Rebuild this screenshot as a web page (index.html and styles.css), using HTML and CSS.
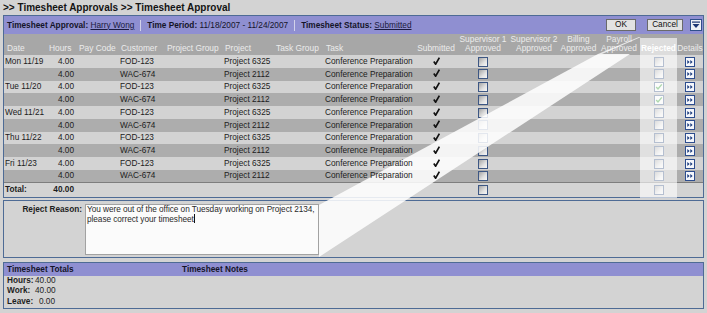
FILE: index.html
```html
<!DOCTYPE html>
<html>
<head>
<meta charset="utf-8">
<link rel="stylesheet" href="styles.css">
</head>
<body>
<h1 class="title">&gt;&gt; Timesheet Approvals &gt;&gt; Timesheet Approval</h1>

<section class="panel main">
  <div class="bar">
    <div class="info">
      <span class="grp"><b>Timesheet Approval:</b> <a class="lnk">Harry Wong</a></span>
      <span class="sep"></span>
      <span class="grp"><b>Time Period:</b> 11/18/2007 - 11/24/2007</span>
      <span class="sep"></span>
      <span class="grp"><b>Timesheet Status:</b> <a class="lnk">Submitted</a></span>
    </div>
    <div class="actions">
      <button class="btn ok">OK</button>
      <button class="btn cancel">Cancel</button>
      <span class="dd"><svg width="12" height="12" viewBox="0 0 12 12"><rect x="0.5" y="0.5" width="11" height="11" fill="#eef0f6" stroke="#2f4f8c"/><rect x="2" y="2.5" width="8" height="1.2" fill="#1c3574"/><path d="M2.5 5 L9.5 5 L6 9 Z" fill="#1c3574"/></svg></span>
    </div>
  </div>

  <table class="grid">
    <colgroup>
      <col class="c-date"><col class="c-hours"><col class="c-pay"><col class="c-cust"><col class="c-pg"><col class="c-proj"><col class="c-tg"><col class="c-task"><col class="c-sub"><col class="c-s1"><col class="c-s2"><col class="c-bill"><col class="c-pay2"><col class="c-rej"><col class="c-det">
    </colgroup>
    <thead>
      <tr class="head">
        <th>Date</th><th>Hours</th><th>Pay Code</th><th>Customer</th><th>Project Group</th><th>Project</th><th>Task Group</th><th>Task</th>
        <th class="ctr">Submitted</th>
        <th class="ctr">Supervisor 1<br>Approved</th>
        <th class="ctr">Supervisor 2<br>Approved</th>
        <th class="ctr">Billing<br>Approved</th>
        <th class="ctr">Payroll<br>Approved</th>
        <th class="ctr rej">Rejected</th>
        <th class="ctr">Details</th>
      </tr>
    </thead>
    <tbody>
      <tr class="r lt"><td class="tx d">Mon 11/19</td><td class="tx h">4.00</td><td></td><td class="tx">FOD-123</td><td></td><td class="tx">Project 6325</td><td></td><td class="tx">Conference Preparation</td><td class="tx ctr"><span class="chk"><svg width="7" height="8" viewBox="0 0 7 8"><path d="M0.8 4.6 L2.6 7.2 L6.4 0.6" stroke="#111" stroke-width="1.7" fill="none"/></svg></span></td><td class="ctr"><span class="cb"></span></td><td></td><td></td><td></td><td class="ctr"><span class="cb"></span></td><td class="ctr"><span class="det"><svg width="10" height="10" viewBox="0 0 10 10"><rect x="0.5" y="0.5" width="9" height="9" fill="#f5f7fc" stroke="#2d4d8e"/><path d="M2.3 3 L4.6 5 L2.3 7 Z M5.3 3 L7.6 5 L5.3 7 Z" fill="#1a3a7c"/></svg></span></td></tr>
      <tr class="r dk"><td class="tx d"></td><td class="tx h">4.00</td><td></td><td class="tx">WAC-674</td><td></td><td class="tx">Project 2112</td><td></td><td class="tx">Conference Preparation</td><td class="tx ctr"><span class="chk"><svg width="7" height="8" viewBox="0 0 7 8"><path d="M0.8 4.6 L2.6 7.2 L6.4 0.6" stroke="#111" stroke-width="1.7" fill="none"/></svg></span></td><td class="ctr"><span class="cb"></span></td><td></td><td></td><td></td><td class="ctr"><span class="cb"></span></td><td class="ctr"><span class="det"><svg width="10" height="10" viewBox="0 0 10 10"><rect x="0.5" y="0.5" width="9" height="9" fill="#f5f7fc" stroke="#2d4d8e"/><path d="M2.3 3 L4.6 5 L2.3 7 Z M5.3 3 L7.6 5 L5.3 7 Z" fill="#1a3a7c"/></svg></span></td></tr>
      <tr class="r lt"><td class="tx d">Tue 11/20</td><td class="tx h">4.00</td><td></td><td class="tx">FOD-123</td><td></td><td class="tx">Project 6325</td><td></td><td class="tx">Conference Preparation</td><td class="tx ctr"><span class="chk"><svg width="7" height="8" viewBox="0 0 7 8"><path d="M0.8 4.6 L2.6 7.2 L6.4 0.6" stroke="#111" stroke-width="1.7" fill="none"/></svg></span></td><td class="ctr"><span class="cb"></span></td><td></td><td></td><td></td><td class="ctr"><span class="cb on"><svg width="8" height="8" viewBox="0 0 8 8"><path d="M1.2 4 L3 6 L6.8 1.4" stroke="#2c9a2c" stroke-width="1.4" fill="none"/></svg></span></td><td class="ctr"><span class="det"><svg width="10" height="10" viewBox="0 0 10 10"><rect x="0.5" y="0.5" width="9" height="9" fill="#f5f7fc" stroke="#2d4d8e"/><path d="M2.3 3 L4.6 5 L2.3 7 Z M5.3 3 L7.6 5 L5.3 7 Z" fill="#1a3a7c"/></svg></span></td></tr>
      <tr class="r dk"><td class="tx d"></td><td class="tx h">4.00</td><td></td><td class="tx">WAC-674</td><td></td><td class="tx">Project 2112</td><td></td><td class="tx">Conference Preparation</td><td class="tx ctr"><span class="chk"><svg width="7" height="8" viewBox="0 0 7 8"><path d="M0.8 4.6 L2.6 7.2 L6.4 0.6" stroke="#111" stroke-width="1.7" fill="none"/></svg></span></td><td class="ctr"><span class="cb"></span></td><td></td><td></td><td></td><td class="ctr"><span class="cb on"><svg width="8" height="8" viewBox="0 0 8 8"><path d="M1.2 4 L3 6 L6.8 1.4" stroke="#2c9a2c" stroke-width="1.4" fill="none"/></svg></span></td><td class="ctr"><span class="det"><svg width="10" height="10" viewBox="0 0 10 10"><rect x="0.5" y="0.5" width="9" height="9" fill="#f5f7fc" stroke="#2d4d8e"/><path d="M2.3 3 L4.6 5 L2.3 7 Z M5.3 3 L7.6 5 L5.3 7 Z" fill="#1a3a7c"/></svg></span></td></tr>
      <tr class="r lt"><td class="tx d">Wed 11/21</td><td class="tx h">4.00</td><td></td><td class="tx">FOD-123</td><td></td><td class="tx">Project 6325</td><td></td><td class="tx">Conference Preparation</td><td class="tx ctr"><span class="chk"><svg width="7" height="8" viewBox="0 0 7 8"><path d="M0.8 4.6 L2.6 7.2 L6.4 0.6" stroke="#111" stroke-width="1.7" fill="none"/></svg></span></td><td class="ctr"><span class="cb"></span></td><td></td><td></td><td></td><td class="ctr"><span class="cb"></span></td><td class="ctr"><span class="det"><svg width="10" height="10" viewBox="0 0 10 10"><rect x="0.5" y="0.5" width="9" height="9" fill="#f5f7fc" stroke="#2d4d8e"/><path d="M2.3 3 L4.6 5 L2.3 7 Z M5.3 3 L7.6 5 L5.3 7 Z" fill="#1a3a7c"/></svg></span></td></tr>
      <tr class="r dk"><td class="tx d"></td><td class="tx h">4.00</td><td></td><td class="tx">WAC-674</td><td></td><td class="tx">Project 2112</td><td></td><td class="tx">Conference Preparation</td><td class="tx ctr"><span class="chk"><svg width="7" height="8" viewBox="0 0 7 8"><path d="M0.8 4.6 L2.6 7.2 L6.4 0.6" stroke="#111" stroke-width="1.7" fill="none"/></svg></span></td><td class="ctr"><span class="cb"></span></td><td></td><td></td><td></td><td class="ctr"><span class="cb"></span></td><td class="ctr"><span class="det"><svg width="10" height="10" viewBox="0 0 10 10"><rect x="0.5" y="0.5" width="9" height="9" fill="#f5f7fc" stroke="#2d4d8e"/><path d="M2.3 3 L4.6 5 L2.3 7 Z M5.3 3 L7.6 5 L5.3 7 Z" fill="#1a3a7c"/></svg></span></td></tr>
      <tr class="r lt"><td class="tx d">Thu 11/22</td><td class="tx h">4.00</td><td></td><td class="tx">FOD-123</td><td></td><td class="tx">Project 6325</td><td></td><td class="tx">Conference Preparation</td><td class="tx ctr"><span class="chk"><svg width="7" height="8" viewBox="0 0 7 8"><path d="M0.8 4.6 L2.6 7.2 L6.4 0.6" stroke="#111" stroke-width="1.7" fill="none"/></svg></span></td><td class="ctr"><span class="cb"></span></td><td></td><td></td><td></td><td class="ctr"><span class="cb"></span></td><td class="ctr"><span class="det"><svg width="10" height="10" viewBox="0 0 10 10"><rect x="0.5" y="0.5" width="9" height="9" fill="#f5f7fc" stroke="#2d4d8e"/><path d="M2.3 3 L4.6 5 L2.3 7 Z M5.3 3 L7.6 5 L5.3 7 Z" fill="#1a3a7c"/></svg></span></td></tr>
      <tr class="r dk"><td class="tx d"></td><td class="tx h">4.00</td><td></td><td class="tx">WAC-674</td><td></td><td class="tx">Project 2112</td><td></td><td class="tx">Conference Preparation</td><td class="tx ctr"><span class="chk"><svg width="7" height="8" viewBox="0 0 7 8"><path d="M0.8 4.6 L2.6 7.2 L6.4 0.6" stroke="#111" stroke-width="1.7" fill="none"/></svg></span></td><td class="ctr"><span class="cb"></span></td><td></td><td></td><td></td><td class="ctr"><span class="cb"></span></td><td class="ctr"><span class="det"><svg width="10" height="10" viewBox="0 0 10 10"><rect x="0.5" y="0.5" width="9" height="9" fill="#f5f7fc" stroke="#2d4d8e"/><path d="M2.3 3 L4.6 5 L2.3 7 Z M5.3 3 L7.6 5 L5.3 7 Z" fill="#1a3a7c"/></svg></span></td></tr>
      <tr class="r lt"><td class="tx d">Fri 11/23</td><td class="tx h">4.00</td><td></td><td class="tx">FOD-123</td><td></td><td class="tx">Project 6325</td><td></td><td class="tx">Conference Preparation</td><td class="tx ctr"><span class="chk"><svg width="7" height="8" viewBox="0 0 7 8"><path d="M0.8 4.6 L2.6 7.2 L6.4 0.6" stroke="#111" stroke-width="1.7" fill="none"/></svg></span></td><td class="ctr"><span class="cb"></span></td><td></td><td></td><td></td><td class="ctr"><span class="cb"></span></td><td class="ctr"><span class="det"><svg width="10" height="10" viewBox="0 0 10 10"><rect x="0.5" y="0.5" width="9" height="9" fill="#f5f7fc" stroke="#2d4d8e"/><path d="M2.3 3 L4.6 5 L2.3 7 Z M5.3 3 L7.6 5 L5.3 7 Z" fill="#1a3a7c"/></svg></span></td></tr>
      <tr class="r dk"><td class="tx d"></td><td class="tx h">4.00</td><td></td><td class="tx">WAC-674</td><td></td><td class="tx">Project 2112</td><td></td><td class="tx">Conference Preparation</td><td class="tx ctr"><span class="chk"><svg width="7" height="8" viewBox="0 0 7 8"><path d="M0.8 4.6 L2.6 7.2 L6.4 0.6" stroke="#111" stroke-width="1.7" fill="none"/></svg></span></td><td class="ctr"><span class="cb"></span></td><td></td><td></td><td></td><td class="ctr"><span class="cb"></span></td><td class="ctr"><span class="det"><svg width="10" height="10" viewBox="0 0 10 10"><rect x="0.5" y="0.5" width="9" height="9" fill="#f5f7fc" stroke="#2d4d8e"/><path d="M2.3 3 L4.6 5 L2.3 7 Z M5.3 3 L7.6 5 L5.3 7 Z" fill="#1a3a7c"/></svg></span></td></tr>
      <tr class="total"><td class="tx d"><b>Total:</b></td><td class="tx h"><b>40.00</b></td><td></td><td></td><td></td><td></td><td></td><td></td><td></td><td class="ctr"><span class="cb"></span></td><td></td><td></td><td></td><td class="ctr"><span class="cb"></span></td><td></td></tr>
    </tbody>
  </table>
</section>

<section class="panel reject">
  <div class="rlabel">Reject Reason:</div>
  <div class="textarea">You were out of the office on Tuesday working on Project 2134,<br>please correct your timesheet<span class="caret"></span></div>
</section>

<section class="panel totals">
  <div class="bar2">
    <div class="tcol">Timesheet Totals</div>
    <div class="ncol">Timesheet Notes</div>
  </div>
  <div class="tlist">
    <div class="trow"><b>Hours:</b><span>40.00</span></div>
    <div class="trow"><b>Work:</b><span>40.00</span></div>
    <div class="trow"><b>Leave:</b><span>0.00</span></div>
  </div>
</section>

<svg class="callout" width="707" height="313" viewBox="0 0 707 313">
  <rect x="640" y="38" width="37" height="160" fill="#ffffff" fill-opacity="0.62"/>
  <polygon points="598,54 630,54 319,257 319,205" fill="#ffffff" fill-opacity="0.86"/>
  <polygon points="598,54 602,54 641,37 639,37" fill="#ffffff" fill-opacity="0.75"/>
</svg>
</body>
</html>
```
FILE: styles.css
```css
* { box-sizing: border-box; }
html, body { margin: 0; padding: 0; }
body {
  background: #d3d3d3;
  font-family: "Liberation Sans", Arial, sans-serif;
  font-size: 8.25px;
  color: #1e1e1e;
  width: 707px;
  height: 313px;
  overflow: hidden;
  position: relative;
}
.title {
  margin: 0;
  padding-left: 3px;
  height: 15px;
  font-size: 10px;
  line-height: 15px;
  font-weight: bold;
  color: #141414;
}
.panel {
  margin: 0 3px;
  border: 1px solid #4e6b95;
  background: #d3d3d3;
}
.bar {
  display: flex;
  align-items: center;
  justify-content: space-between;
  height: 18px;
  padding: 0 1px 0 3px;
  background: #8f8fd1;
}
.info { display: flex; align-items: center; gap: 6px; white-space: nowrap; color: #141428; }
.info b { font-weight: bold; }
.lnk { text-decoration: underline; color: #1a1a40; }
.sep { width: 1px; height: 11px; background: #d2d2ea; }
.actions { display: flex; align-items: center; }
.btn {
  height: 12px;
  margin: 0;
  padding: 0;
  border: 1px solid #6a6a6a;
  background: #e2e2e2;
  font-family: inherit;
  font-size: 8.25px;
  line-height: 10px;
  color: #111;
}
.ok { width: 30px; }
.cancel { width: 36px; margin-left: 11px; }
.dd { display: flex; margin-left: 7px; }

.grid {
  width: 699px;
  table-layout: fixed;
  border-collapse: collapse;
  border-spacing: 0;
}
.c-date { width: 42px; }
.c-hours { width: 30px; }
.c-pay { width: 42px; }
.c-cust { width: 46px; }
.c-pg { width: 58px; }
.c-proj { width: 51px; }
.c-tg { width: 50px; }
.c-task { width: 92px; }
.c-sub { width: 42px; }
.c-s1 { width: 52px; }
.c-s2 { width: 50px; }
.c-bill { width: 39px; }
.c-pay2 { width: 42px; }
.c-rej { width: 37px; }
.c-det { width: 26px; }

.head { background: #a7a7a7; }
.head th {
  height: 21px;
  padding: 0 0 2px 3px;
  vertical-align: bottom;
  text-align: left;
  font-weight: normal;
  font-size: 8.4px;
  line-height: 9px;
  color: #ececec;
  white-space: nowrap;
  overflow: visible;
}
.head th.ctr { text-align: center; padding-left: 0; }
.head th.rej { color: #ffffff; font-weight: bold; }

.r td {
  height: 12.75px;
  padding: 0 0 0 2px;
  line-height: 11px;
  white-space: nowrap;
  vertical-align: middle;
}
.lt { background: #d3d3d3; }
.dk { background: #adadad; }
td.tx { position: relative; z-index: 2; color: #1c1c1c; }
td.d { padding-left: 1px; }
td.h { text-align: right; padding: 0 2px 0 0; }
td.ctr { text-align: center; padding: 0; }
.r td.ctr { padding: 0; }

.total { background: #d3d3d3; border-top: 1px solid #7d7d7d; }
.total td { height: 14px; padding: 0; line-height: 12px; vertical-align: middle; }
.total td.d { padding-left: 1px; }
.total td.h { padding-right: 2px; }

.chk { display: inline-flex; vertical-align: middle; margin-top: -2px; }
.cb {
  display: inline-flex;
  align-items: center;
  justify-content: center;
  width: 10px;
  height: 10px;
  vertical-align: middle;
  border: 1px solid #3d5784;
  background: linear-gradient(135deg, #a4a4a4 0%, #e2e2e2 60%, #f6f6f6 100%);
}
.cb.on { background: #f6f6f6; }
.det { display: inline-flex; vertical-align: middle; }

.reject {
  margin-top: 2px;
  display: flex;
  align-items: flex-start;
  height: 58px;
  padding-top: 3px;
}
.rlabel {
  width: 80px;
  padding-right: 2px;
  text-align: right;
  font-weight: bold;
  line-height: 11px;
  color: #1e1e1e;
}
.textarea {
  width: 234px;
  height: 51px;
  margin-left: 1px;
  padding: 0 1px;
  border: 1px solid #a2a2a2;
  background: #fbfbfb;
  line-height: 9.5px;
  color: #2a2a2a;
  white-space: nowrap;
  overflow: hidden;
  letter-spacing: -0.05px;
}
.caret {
  display: inline-block;
  width: 1px;
  height: 9px;
  background: #111;
  vertical-align: -1px;
}

.totals { margin-top: 4px; height: 47px; }
.bar2 {
  display: flex;
  height: 13px;
  align-items: center;
  background: #8f8fd1;
  padding-left: 3px;
  font-weight: bold;
  color: #141428;
}
.tcol { width: 175px; }
.tlist { padding: 0 0 0 3px; }
.trow { display: flex; line-height: 10.5px; }
.trow b { width: 28px; }
.trow span { width: 20px; text-align: right; }

.callout {
  position: absolute;
  left: 0;
  top: 0;
  z-index: 1;
  pointer-events: none;
}
```
